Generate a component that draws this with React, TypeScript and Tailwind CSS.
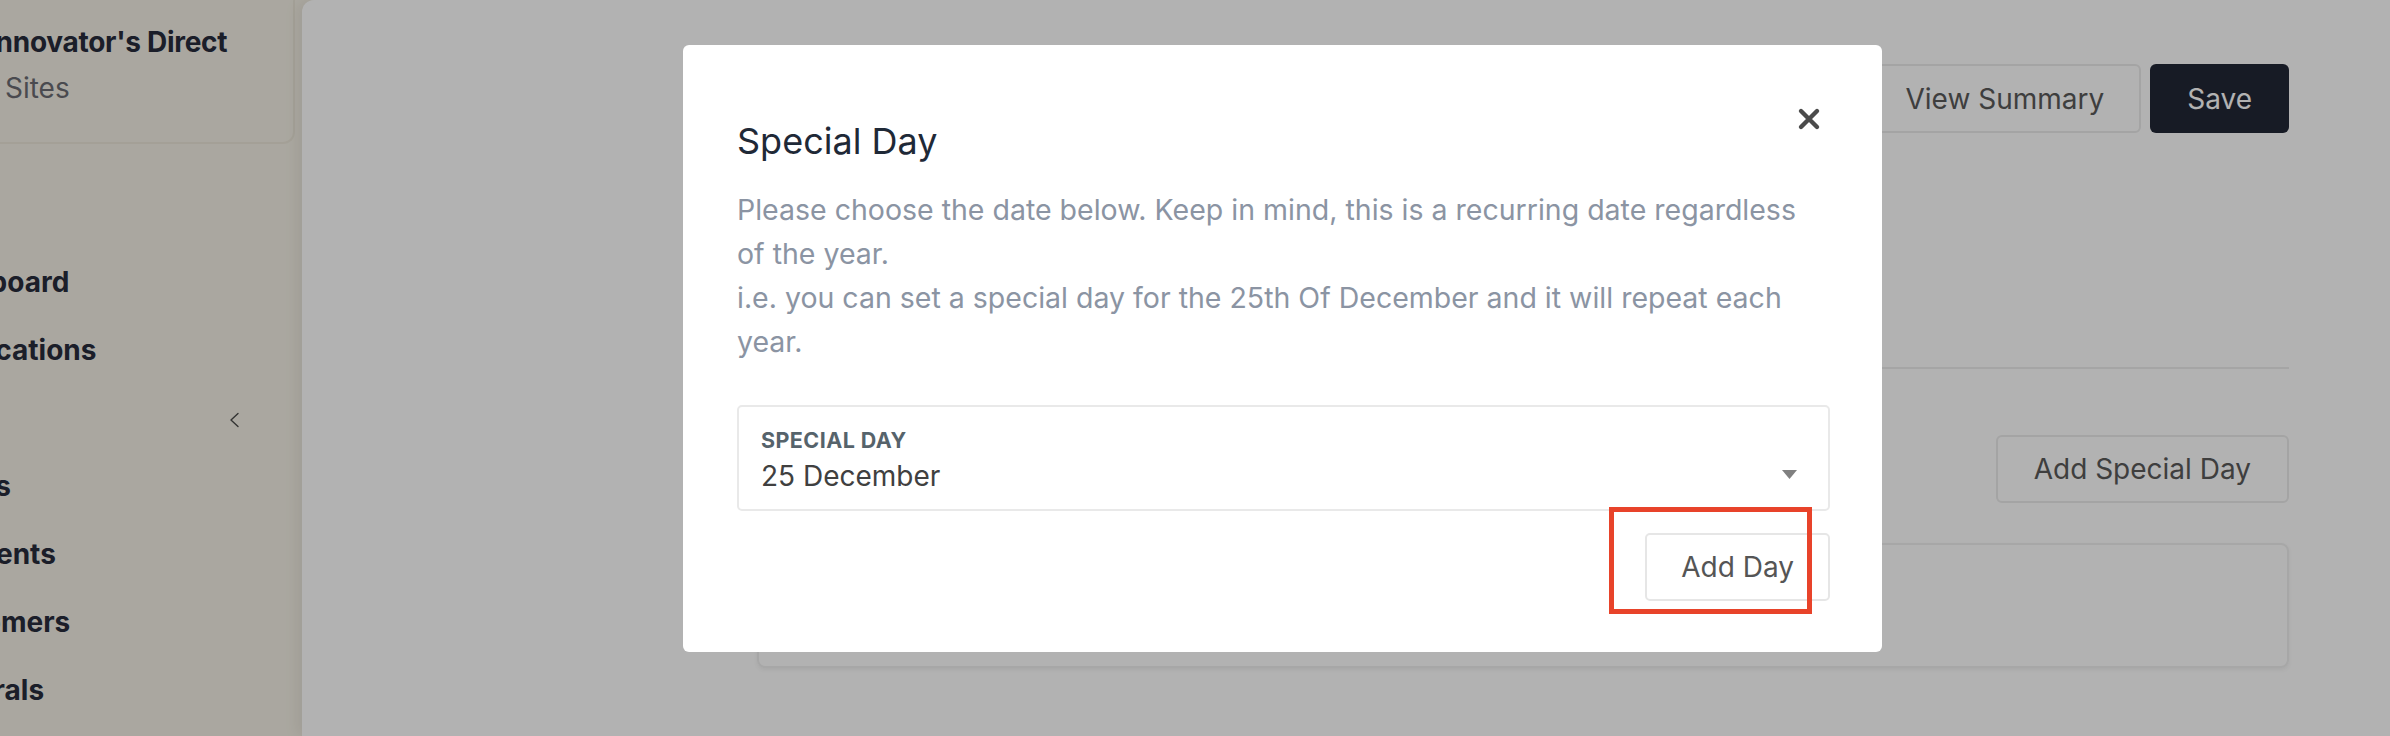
import React from 'react';

const navItems = [
  { label: 'Dashboard' },
  { label: 'Notifications' },
  { label: 'Sites', collapsible: true },
  { label: 'Teams' },
  { label: 'Payments' },
  { label: 'Customers' },
  { label: 'Referrals' },
];

const Sidebar: React.FC = () => {
  return (
    <aside className="w-[302px] shrink-0 flex flex-col">
      {/* Account header */}
      <div className="h-[144px] w-[295px] border-b-2 border-r-2 border-[#ebe6d9] rounded-br-[12px] pt-[25px]">
        <div className="-ml-[12px] flex flex-col whitespace-nowrap">
          <div className="text-[28px] leading-[34px] font-bold tracking-[-0.01em] text-[#272b3c]">
            Innovator's Direct
          </div>
          <div className="mt-[12px] -ml-[8px] text-[28px] leading-[34px] text-[#6a6b72]">2 Sites</div>
        </div>
      </div>

      {/* Navigation */}
      <nav className="-ml-[80px] mt-[104px] pr-[62px] flex flex-col">
        {navItems.map((item) => (
          <div
            key={item.label}
            className="h-[68px] flex items-center justify-between whitespace-nowrap text-[28px] font-bold text-[#272b3c]"
          >
            <span>{item.label}</span>
            {item.collapsible && (
              <svg className="mt-[3px]" width="12" height="16" viewBox="0 0 12 16" fill="none">
                <path d="M10 1.5 L3 8 L10 14.5" stroke="#4a4a4a" strokeWidth="1.4" strokeLinecap="round" strokeLinejoin="round" />
              </svg>
            )}
          </div>
        ))}
      </nav>
    </aside>
  );
};

const MainContent: React.FC = () => {
  return (
    <main className="flex-1 bg-white rounded-tl-[12px] shadow-[-6px_0_14px_rgba(0,0,0,0.06)] pl-[455px] pr-[101px] flex flex-col">
      {/* Page header actions */}
      <div className="mt-[64px] h-[69px] flex items-center justify-end">
        <div className="flex gap-[9px]">
          <button className="h-[69px] px-[35px] border-2 border-[#ebebeb] rounded-[6px] text-[28px] text-[#5a5a5a]">
            View Summary
          </button>
          <button className="h-[69px] px-[37px] rounded-[6px] bg-[#222736] text-[28px] text-white">
            Save
          </button>
        </div>
      </div>

      {/* Tabs divider */}
      <div className="mt-[174px] h-[62px] border-b-2 border-[#ececec]" />

      {/* Special days section */}
      <div className="mt-[66px] h-[68px] flex items-center justify-end">
        <button className="h-[68px] px-[36px] border-2 border-[#ebebeb] rounded-[6px] text-[28px] text-[#5a5a5a]">
          Add Special Day
        </button>
      </div>

      <div className="mt-[40px] h-[125px] border-2 border-[#efefef] rounded-[8px] shadow-[0_2px_4px_rgba(0,0,0,0.06)]" />
    </main>
  );
};

const SpecialDayModal: React.FC = () => {
  return (
    <div className="relative w-[1199px] h-[607px] bg-white rounded-[6px] pt-[63px] pl-[54px] pr-[52px] flex flex-col">
      {/* Title row */}
      <div className="flex items-start justify-between">
        <h2 className="mt-[13px] text-[36px] leading-[40px] text-[#1f2937]">Special Day</h2>
        <button className="w-[24px] h-[24px] -mt-[1px] mr-[9px]">
          <svg width="24" height="24" viewBox="0 0 24 24" fill="none">
            <path d="M4 4 L20 20 M20 4 L4 20" stroke="#4b4b4b" strokeWidth="4.4" strokeLinecap="round" />
          </svg>
        </button>
      </div>

      <p className="mt-[27px] w-[1068px] text-[28.5px] leading-[44px] text-[#8b94a3]">
        Please choose the date below. Keep in mind, this is a recurring date regardless of the year.
        <br />
        i.e. you can set a special day for the 25th Of December and it will repeat each year.
      </p>

      {/* Select */}
      <div className="mt-[41px] h-[106px] border-2 border-[#e9e9e9] rounded-[5px] pt-[20px] pl-[22px] pr-[31px] flex justify-between items-start">
        <div className="flex flex-col">
          <span className="text-[21.5px] leading-[26px] font-bold tracking-[0.02em] text-[#56636b]">SPECIAL DAY</span>
          <span className="mt-[5px] text-[28px] leading-[36px] text-[#404040]">25 December</span>
        </div>
        <svg className="mt-[43px]" width="15" height="9" viewBox="0 0 15 9">
          <path d="M0 0 H15 L7.5 9 Z" fill="#808080" />
        </svg>
      </div>

      <div className="mt-[22px] flex justify-end">
        <button className="h-[68px] px-[34px] border-2 border-[#e6e6e6] rounded-[5px] text-[28px] text-[#555555]">
          Add Day
        </button>
      </div>

      {/* Highlight annotation */}
      <div className="absolute left-[926px] top-[462px] w-[203px] h-[107px] border-[5px] border-[#e8432a]" />
    </div>
  );
};

export default function App() {
  return (
    <div className="relative flex h-[736px] w-[2390px] overflow-hidden bg-[#f4f0e5] font-['Inter',sans-serif]">
      <Sidebar />
      <MainContent />

      {/* Backdrop */}
      <div className="absolute inset-0 bg-black/30 pl-[683px] pt-[45px] flex items-start">
        <SpecialDayModal />
      </div>
    </div>
  );
}
